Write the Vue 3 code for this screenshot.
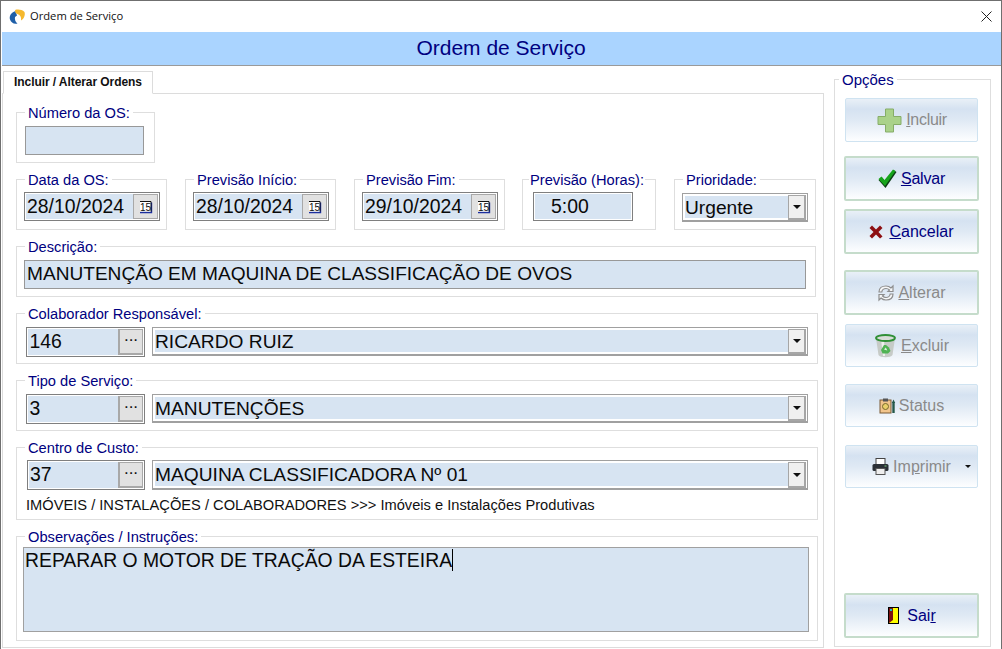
<script setup>
const dateFields = [
  { label: 'Data da OS:', value: '28/10/2024', cls: 'g-date' },
  { label: 'Previsão Início:', value: '28/10/2024', cls: 'g-date gap18' },
  { label: 'Previsão Fim:', value: '29/10/2024', cls: 'g-date gap18' },
]
const lookups = [
  { label: 'Colaborador Responsável:', code: '146', name: 'RICARDO RUIZ' },
  { label: 'Tipo de Serviço:', code: '3', name: 'MANUTENÇÕES' },
]
</script>

<template>
  <div class="window">
    <header class="titlebar">
      <svg class="logo" width="17" height="16" viewBox="0 0 17 16">
        <path d="M6.5 2 C2 3.5 0 7 1 10.5 C2 13.5 5 15.5 8.5 14.5 C6.5 13 5.5 10.5 6 8 L8 6.5 Z" fill="#1f5fa8" />
        <path d="M6 1 C9 0 13 0.5 15.5 3 C16.5 6 15 10 12 11.5 C12.5 8.5 11.5 6 8.5 5 L6.5 4 Z" fill="#f5b82e" />
      </svg>
      <span class="title">Ordem de Serviço</span>
      <svg class="close" width="11" height="11" viewBox="0 0 11 11">
        <path d="M0.5 0.5 L10.5 10.5 M10.5 0.5 L0.5 10.5" stroke="#222" stroke-width="1" />
      </svg>
    </header>
    <div class="banner">Ordem de Serviço</div>

    <div class="body">
      <section class="tabarea">
        <div class="tab">Incluir / Alterar Ordens</div>
        <div class="panel">
          <div class="group g-num">
            <span class="legend">Número da OS:</span>
            <div class="plain num"></div>
          </div>

          <div class="row">
            <div v-for="f in dateFields" :key="f.label" class="group" :class="f.cls">
              <span class="legend">{{ f.label }}</span>
              <div class="field date">
                <span class="val">{{ f.value }}</span>
                <span class="calbtn">
                  <svg width="14" height="14" viewBox="0 0 14 14">
                    <path d="M12.5 2.5 V12.5 H1" fill="none" stroke="#1c2f9e" stroke-width="1.4" />
                    <rect x="1" y="1" width="11" height="10.5" fill="#fff" />
                    <path d="M1 1.5 H12 V11.5" fill="none" stroke="#111" stroke-width="1" />
                    <text x="1" y="10.6" class="caltext">15</text>
                  </svg>
                </span>
              </div>
            </div>
            <div class="group g-hours">
              <span class="legend tight">Previsão (Horas):</span>
              <div class="field hours"><span class="val">5:00</span></div>
            </div>
            <div class="group g-prio">
              <span class="legend">Prioridade:</span>
              <div class="select prio">
                <span class="sval">Urgente</span>
                <span class="arrow"><i></i></span>
              </div>
            </div>
          </div>

          <div class="group g-desc">
            <span class="legend">Descrição:</span>
            <div class="plain desc">MANUTENÇÃO EM MAQUINA DE CLASSIFICAÇÃO DE OVOS</div>
          </div>

          <div v-for="l in lookups" :key="l.label" class="group g-look">
            <span class="legend">{{ l.label }}</span>
            <div class="lookrow">
              <div class="field code">
                <span class="val">{{ l.code }}</span>
                <span class="dots">...</span>
              </div>
              <div class="select name">
                <span class="sval">{{ l.name }}</span>
                <span class="arrow"><i></i></span>
              </div>
            </div>
          </div>

          <div class="group g-cost">
            <span class="legend">Centro de Custo:</span>
            <div class="lookrow">
              <div class="field code code2">
                <span class="val">37</span>
                <span class="dots">...</span>
              </div>
              <div class="select name">
                <span class="sval">MAQUINA CLASSIFICADORA Nº 01</span>
                <span class="arrow"><i></i></span>
              </div>
            </div>
            <div class="path">IMÓVEIS / INSTALAÇÕES / COLABORADORES &gt;&gt;&gt; Imóveis e Instalações Produtivas</div>
          </div>

          <div class="group g-obs">
            <span class="legend">Observações / Instruções:</span>
            <div class="memo">REPARAR O MOTOR DE TRAÇÃO DA ESTEIRA<span class="caret"></span></div>
          </div>
        </div>
      </section>

      <aside class="options">
        <span class="legend opt-legend">Opções</span>

        <button class="btn off b-incluir">
          <svg width="25" height="25" viewBox="0 0 25 25">
            <path d="M8.5 1 H16.5 V8.5 H24 V16.5 H16.5 V24 H8.5 V16.5 H1 V8.5 H8.5 Z" fill="#aad28a" stroke="#86ad68" />
          </svg>
          <span class="lbl"><u>I</u>ncluir</span>
        </button>

        <button class="btn on b-salvar">
          <svg width="19" height="20" viewBox="0 0 19 20">
            <path d="M0.5 11 L4 8.5 L7 12 L15.5 1 L18.5 3 L7.5 19 Z" fill="#0c3d14" />
            <path d="M0.5 10 L3.5 7.5 L6.5 11 L15 0.5 L17.5 2 L7 17 Z" fill="#17a41b" />
          </svg>
          <span class="lbl"><u>S</u>alvar</span>
        </button>

        <button class="btn on b-cancelar">
          <svg width="14" height="14" viewBox="0 0 14 14">
            <path d="M0.5 3 L3 0.5 L7 4.5 L11 0.5 L13.5 3 L9.5 7 L13.5 11.5 L11 13.5 L7 9.5 L3 13.5 L0.5 11 L4.5 7 Z" fill="#8d0f12" />
          </svg>
          <span class="lbl"><u>C</u>ancelar</span>
        </button>

        <button class="btn on dim b-alterar">
          <svg width="18" height="18" viewBox="0 0 18 18" fill="none" stroke="#8d8d8d" stroke-width="1.2">
            <path d="M2 8 C2 4 5 2 9 2 C11 2 13 3 14 4 L16 2 V7.5 H11 L12.5 6 C11.5 5 10 4.5 9 4.5 C7 4.5 5 6 4.8 8 Z" fill="#f6f7f8" />
            <path d="M16 10 C16 14 13 16 9 16 C7 16 5 15 4 14 L2 16 V10.5 H7 L5.5 12 C6.5 13 8 13.5 9 13.5 C11 13.5 13 12 13.2 10 Z" fill="#f6f7f8" />
          </svg>
          <span class="lbl"><u>A</u>lterar</span>
        </button>

        <button class="btn off b-excluir">
          <svg width="21" height="24" viewBox="0 0 21 24">
            <path d="M1 4 L3.5 21 C5 24 16 24 17.5 21 L20 4 Z" fill="#c6cbc7" />
            <path d="M6 5 L8 22 H10 L9 6 Z" fill="#eef1ee" />
            <ellipse cx="10.5" cy="4" rx="9.5" ry="3" fill="#d8ddd8" stroke="#2f8f36" stroke-width="1.8" />
            <path d="M6 16 L9 11 L11 11 L14 13.5 L15.5 17 L13 19.5 H7.5 Z" fill="#4fb354" />
            <path d="M9 15.5 L10.8 13.5 L12.3 16.5 Z" fill="#e4f1e4" />
          </svg>
          <span class="lbl"><u>E</u>xcluir</span>
        </button>

        <button class="btn off b-status">
          <svg width="17" height="16" viewBox="0 0 17 16">
            <rect x="1" y="2" width="11" height="13" fill="#f2c58c" stroke="#7a5b35" />
            <rect x="4" y="0.5" width="5" height="3" fill="#555" />
            <circle cx="6.5" cy="8.5" r="3" fill="#ead06a" stroke="#77682a" />
            <path d="M14.5 15 V4" stroke="#24584a" stroke-width="2.4" />
            <path d="M14.5 1.5 L12.8 5 H16.2 Z" fill="#24584a" />
          </svg>
          <span class="lbl">Status</span>
        </button>

        <button class="btn off b-imprimir">
          <svg width="17" height="17" viewBox="0 0 17 17">
            <rect x="4" y="0.5" width="9" height="6" fill="#fff" stroke="#444" />
            <rect x="0.5" y="6" width="16" height="7" rx="1.5" fill="#2b3036" />
            <rect x="4" y="10.5" width="9" height="6" fill="#eee" stroke="#555" />
            <rect x="12.5" y="7.5" width="2" height="1" fill="#7fd07f" />
          </svg>
          <span class="lbl">Im<u>p</u>rimir</span>
          <i class="menu-caret"></i>
        </button>

        <button class="btn on b-sair">
          <svg width="11" height="17" viewBox="0 0 11 17">
            <rect x="0.5" y="0.5" width="10" height="16" fill="#ffff00" stroke="#000" />
            <path d="M1 1 H5 V13 L1 16 Z" fill="#7c1212" />
            <rect x="2" y="2" width="2" height="2" fill="#17c4c4" />
          </svg>
          <span class="lbl">Sai<u>r</u></span>
        </button>
      </aside>
    </div>
  </div>
</template>

<style>
html, body { margin: 0; padding: 0; background: #fff; overflow: hidden; }
</style>

<style scoped>
* { box-sizing: border-box; }
.window {
  width: 1002px;
  height: 649px;
  display: flex;
  flex-direction: column;
  border: 1px solid #6f6f6f;
  border-bottom: none;
  background: #fff;
  font-family: "Liberation Sans", Arial, sans-serif;
  overflow: hidden;
}
.titlebar {
  height: 31px;
  flex: none;
  display: flex;
  align-items: center;
  padding-left: 8px;
  padding-right: 9px;
}
.logo { margin-right: 4px; }
.title {
  font-family: "Open Sans", "Noto Sans", sans-serif;
  font-size: 11.2px;
  line-height: 14px;
  margin-top: -2px;
  color: #111;
}
.close { margin-left: auto; }
.banner {
  flex: none;
  height: 34px;
  margin-left: 1px;
  background: #aad4ff;
  border-bottom: 1px solid #9a9a9a;
  color: #000080;
  font-size: 21px;
  line-height: 32px;
  text-align: center;
  padding-right: 1px;
}
.body { flex: 1; display: flex; min-height: 0; }
.tabarea {
  width: 823px;
  flex: none;
  padding-top: 5px;
  padding-left: 1px;
  display: flex;
  flex-direction: column;
}
.tab {
  width: 150px;
  height: 23px;
  margin-left: 1px;
  margin-bottom: -1px;
  background: #fff;
  border: 1px solid #dcdcdc;
  border-bottom: 1px solid #fff;
  position: relative;
  z-index: 1;
  font-size: 12px;
  font-weight: 700;
  color: #111;
  line-height: 21px;
  padding-left: 10px;
  letter-spacing: -0.07px;
}
.panel {
  flex: 1;
  border: 1px solid #dcdcdc;
  padding: 18px 0 0 13px;
  margin-bottom: 1px;
  display: flex;
  flex-direction: column;
  gap: 16px;
}
.group {
  position: relative;
  border: 1px solid #dedede;
  flex: none;
}
.legend {
  position: absolute;
  top: -8px;
  left: 8px;
  padding: 0 3px;
  background: #fff;
  color: #000080;
  font-size: 14.67px;
  line-height: 16px;
  white-space: nowrap;
}
.legend.tight { left: 6px; padding: 0 1px; }
.g-num { width: 139px; height: 51px; padding: 13px 0 0 8px; }
.plain {
  background: #d7e4f2;
  border: 1px solid #989898;
  color: #0a0a0a;
  font-size: 19.1px;
}
.num { width: 119px; height: 29px; }
.row { display: flex; flex: none; }
.g-date { width: 151px; height: 51px; padding: 12px 0 0 7px; }
.gap18 { margin-left: 18px; }
.g-hours { width: 134px; height: 51px; margin-left: 17px; padding: 12px 0 0 10px; }
.g-prio { width: 142px; height: 51px; margin-left: 18px; padding: 13px 0 0 7px; }
.field {
  display: flex;
  align-items: stretch;
  background: #d7e4f2;
  border: 1px solid #7f7f7f;
  box-shadow: inset 0 0 0 1px #fff;
  padding: 1px;
}
.val {
  flex: 1;
  color: #0a0a0a;
  font-size: 19.4px;
  line-height: 24px;
  padding-left: 1px;
}
.date { width: 136px; height: 29px; }
.calbtn {
  width: 25px;
  flex: none;
  background: #e1e1e1;
  border: 1px solid #a8a8a8;
  display: flex;
  align-items: center;
  justify-content: center;
}
.caltext {
  font-family: "Liberation Sans", sans-serif;
  font-size: 10px;
  fill: #111;
}
.hours { width: 100px; height: 29px; }
.hours .val { padding-left: 16px; }
.select {
  display: flex;
  align-items: stretch;
  background: #d7e4f2;
  border: 1px solid #a0a0a0;
  border-width: 1px 1px 2px 1px;
  box-shadow: inset 0 0 0 2px #fff;
  padding: 2px 2px 1px 2px;
}
.sval {
  flex: 1;
  color: #0a0a0a;
  font-size: 19.2px;
  line-height: 24px;
  min-width: 0;
  white-space: nowrap;
}
.arrow {
  width: 18px;
  flex: none;
  margin: -1px -1px -1px 0;
  background: #f0f0f0;
  border: 1px solid #a6a6a6;
  border-width: 1px 2px 2px 1px;
  display: flex;
  align-items: center;
  justify-content: center;
}
.arrow i {
  width: 0;
  height: 0;
  border-left: 4px solid transparent;
  border-right: 4px solid transparent;
  border-top: 4px solid #111;
}
.prio { width: 126px; height: 29px; }
.g-desc { width: 800px; height: 51px; padding: 13px 0 0 7px; }
.desc { width: 782px; height: 29px; line-height: 26px; padding-left: 2px; }
.g-look { width: 802px; height: 51px; padding: 13px 0 0 9px; }
.lookrow { display: flex; gap: 7px; }
.code { width: 119px; height: 30px; }
.code2 { width: 118px; margin-left: 1px; margin-top: -1px; }
.code .val { padding-left: 1.5px; line-height: 25px; }
.code2 .val { padding-left: 1px; }
.dots {
  width: 25px;
  flex: none;
  background: #e1e1e1;
  border: 1px solid #a8a8a8;
  border-width: 1px 1px 2px 2px;
  text-align: center;
  font-size: 17px;
  line-height: 11px;
  color: #111;
}
.name { width: 656px; height: 29px; }
.g-cost { width: 802px; height: 73px; padding: 13px 0 0 9px; }
.g-cost .name { height: 30px; margin-top: -1px; }
.path {
  font-size: 14.67px;
  line-height: 16px;
  color: #111;
  margin-top: 7px;
}
.g-obs { width: 802px; height: 105px; padding: 10px 0 0 6px; }
.memo {
  width: 786px;
  height: 85px;
  background: #d7e4f2;
  border: 1px solid #a0a0a0;
  color: #0a0a0a;
  font-size: 19.37px;
  line-height: 24px;
  padding: 0 0 0 1px;
}
.caret {
  display: inline-block;
  width: 1px;
  height: 22px;
  background: #000;
  vertical-align: top;
  margin-top: 1px;
}
.options {
  position: relative;
  width: 157px;
  flex: none;
  margin: 13px 0 2px 10px;
  border: 1px solid #dedede;
  padding: 18px 0 0 9px;
  display: flex;
  flex-direction: column;
  align-items: flex-start;
}
.opt-legend { left: 4px; top: -8px; font-size: 15px; }
.btn {
  flex: none;
  margin: 0;
  padding: 0;
  display: flex;
  align-items: center;
  justify-content: center;
  font-family: inherit;
  font-size: 16px;
  border-radius: 2px;
  background: linear-gradient(#e9f0f7 0, #d5e2f1 24%, #dfe9f4 50%, #fdfeff 100%);
  position: relative;
}
.lbl { margin-left: 3px; }
.on {
  width: 135px;
  height: 45px;
  border: 2px solid #c5dccb;
  color: #000080;
}
.off {
  width: 133px;
  height: 43px;
  margin-left: 1px;
  border: 1px solid #cfe3f1;
  color: #8a8a8a;
}
.dim { color: #8a8a8a; }
.b-incluir { height: 44px; }
.b-incluir svg { margin-left: 1px; }
.b-incluir .lbl { margin-left: 4px; letter-spacing: -0.3px; }
.b-salvar { margin-top: 14px; }
.b-salvar .lbl { letter-spacing: -0.2px; margin-left: 4px; }
.b-cancelar { margin-top: 8px; }
.b-cancelar .lbl { margin-left: 6px; }
.b-alterar { margin-top: 16px; }
.b-excluir { margin-top: 9px; }
.b-excluir svg { margin-left: 1px; }
.b-excluir .lbl { margin-left: 5px; }
.b-status { margin-top: 17px; }
.b-imprimir { margin-top: 18px; }
.b-imprimir svg { margin-right: 1px; }
.b-sair { margin-top: auto; margin-bottom: 8px; }
.b-sair svg { margin-left: 1px; }
.b-sair .lbl { margin-left: 8px; }
.menu-caret {
  position: absolute;
  right: 6px;
  top: 19px;
  width: 0;
  height: 0;
  border-left: 3px solid transparent;
  border-right: 3px solid transparent;
  border-top: 3px solid #111;
}
</style>
